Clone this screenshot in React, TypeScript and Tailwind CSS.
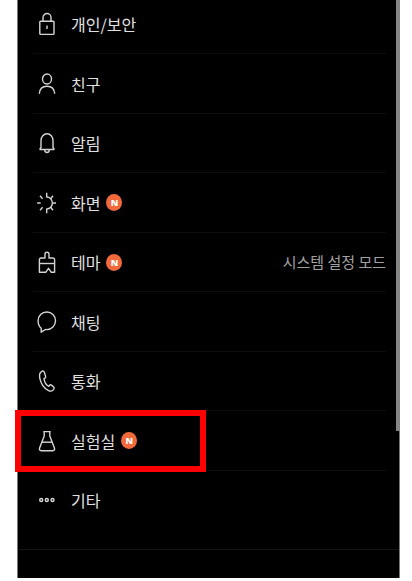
import React from 'react';

interface SettingItem {
  id: string;
  label: string;
  icon: React.ReactNode;
  isNew?: boolean;
  value?: string;
  highlighted?: boolean;
}

const items: SettingItem[] = [
  {
    id: 'privacy',
    label: '개인/보안',
    icon: (
      <>
        <rect x="4.8" y="9.2" width="14.2" height="13.2" rx="0.8" />
        <path d="M8 9V5.5a4 4 0 0 1 8 0V9" />
        <path d="M12 13.5v3.5" />
      </>
    ),
  },
  {
    id: 'friends',
    label: '친구',
    icon: (
      <>
        <ellipse cx="12" cy="7" rx="4.5" ry="5" />
        <path d="M4.3 21.8c.3-4.8 3.2-7.6 7.7-7.6s7.4 2.8 7.7 7.6" />
      </>
    ),
  },
  {
    id: 'alerts',
    label: '알림',
    icon: (
      <>
        <path d="M4.5 18.5h15M4.7 18.5L6 16.5V9.5a6 6.8 0 0 1 12 0v7l1.3 2" />
        <path d="M9.7 18.7a2.3 2.8 0 0 0 4.6 0" />
      </>
    ),
  },
  {
    id: 'display',
    label: '화면',
    isNew: true,
    icon: (
      <>
        <path d="M11.7 1.8v4.2c1.6 0 3 .6 4 1.7s1.7 2.7 1.7 4.3-.7 3.2-1.7 4.3-2.4 1.7-4 1.7v4.2" />
        <path d="m15.7 7.7 2.3-3M17.4 12h3.6M15.7 16.3l2.3 3" />
        <path d="m5 4.8 2.6 3M2.2 12h3.5M5 19.2l2.6-3" />
      </>
    ),
  },
  {
    id: 'theme',
    label: '테마',
    isNew: true,
    value: '시스템 설정 모드',
    icon: (
      <>
        <path d="M10 8V4.2a2 2 0 0 1 4 0V8h3.8a1.8 1.8 0 0 1 1.8 1.8V22.3H16.3L13.5 18.3 10.7 22.3H4.4V9.8A1.8 1.8 0 0 1 6.2 8z" />
        <path d="M4.4 13.5h15.2" />
      </>
    ),
  },
  {
    id: 'chats',
    label: '채팅',
    icon: (
      <path d="M6.2 18.3v3.9l4.2-2.7c.5.1.9.1 1.4.1 4.9 0 8.7-3.9 8.7-8.8S16.7 2 11.8 2 3.1 5.9 3.1 10.8c0 3.1 1.2 5.9 3.1 7.5z" />
    ),
  },
  {
    id: 'calls',
    label: '통화',
    icon: (
      <path d="M7.2 2.2C5 3.3 4.1 5.6 4.7 8.8c1.1 5.6 4.6 10.6 8.9 12.8 2.3 1.1 4.4.3 5.4-1.9.3-.7.1-1.3-.5-1.8l-2.1-1.8c-.6-.5-1.3-.4-1.8.2l-.9 1.1c-2.5-1.3-4.3-4.2-4.7-7.7l1-.6c.7-.4.9-1.1.6-1.9L9.2 3c-.4-.9-1.1-1.2-2-.8z" />
    ),
  },
  {
    id: 'labs',
    label: '실험실',
    isNew: true,
    highlighted: true,
    icon: (
      <>
        <path d="M8.3 2.6h7.4M9.2 2.6V7L4.6 18.9c-.6 1.6.1 2.8 1.6 2.8h11.6c1.5 0 2.2-1.2 1.6-2.8L14.8 7V2.6" />
        <path d="M6.8 13.2h10.4" />
      </>
    ),
  },
  {
    id: 'etc',
    label: '기타',
    icon: (
      <>
        <circle cx="6.2" cy="12" r="1.5" />
        <circle cx="11.8" cy="12" r="1.5" />
        <circle cx="17.5" cy="12" r="1.5" />
      </>
    ),
  },
];

const NewBadge = () => (
  <span className="ml-1.5 flex h-[17px] w-4 items-center justify-center rounded-[50%] bg-[#f26a3c] font-['Open_Sans',sans-serif] text-[9px] font-extrabold leading-none text-white">
    N
  </span>
);

const SettingRow = ({ item }: { item: SettingItem }) => (
  <li className="relative h-[59px] border-b border-[#0d0d0d] last:border-transparent even:h-[60px]">
    <button type="button" className="flex h-full w-full items-center pl-0.5 text-left">
      <svg
        viewBox="0 0 24 24"
        className="h-6 w-6 shrink-0"
        fill="none"
        stroke="#d4d4d4"
        strokeWidth="1.4"
        strokeLinejoin="round"
        aria-hidden="true"
      >
        {item.icon}
      </svg>
      <span className="ml-3 text-base text-[#e0e0e0]">{item.label}</span>
      {item.isNew && <NewBadge />}
      {item.value && <span className="ml-auto text-[15px] text-[#a0a0a0]">{item.value}</span>}
    </button>
    {item.highlighted && (
      <span className="pointer-events-none absolute -bottom-0.5 -left-[18px] -top-px w-[191px] border-[6px] border-[#ff0000]" />
    )}
  </li>
);

export default function App() {
  return (
    <div className="overflow-hidden bg-white pb-[3px] pl-[17px] pr-3 font-['Noto_Sans_CJK_KR',sans-serif]">
      <main className="relative -mt-[5px] border-x border-[#777777] bg-black">
        <ul className="mx-[15px] mr-[13px]">
          {items.map((item) => (
            <SettingRow key={item.id} item={item} />
          ))}
        </ul>
        <div className="mt-[19px] h-[29px] border-t border-[#141414]" />
        {/* scroll thumb */}
        <div className="absolute -right-px top-0 h-[436px] w-1 bg-[#858585]" />
      </main>
    </div>
  );
}
